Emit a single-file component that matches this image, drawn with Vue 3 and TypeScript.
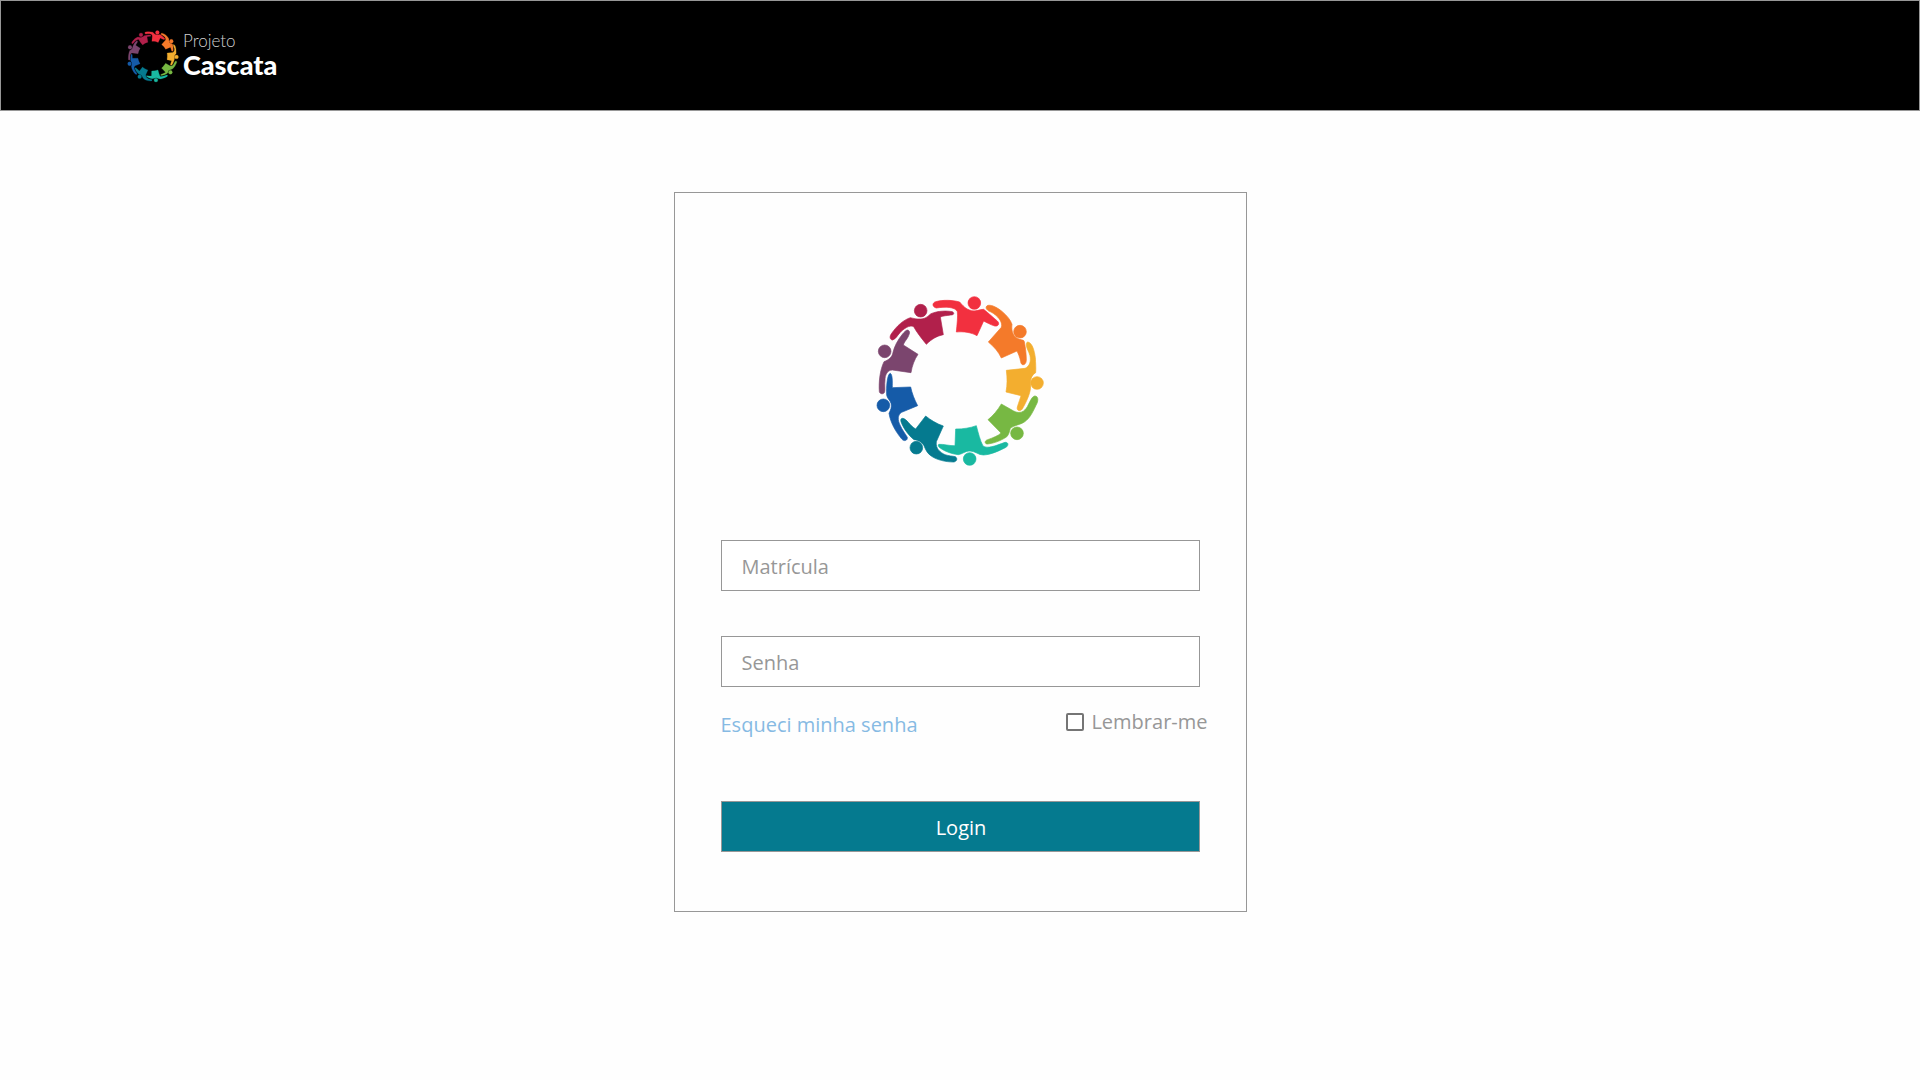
<script setup lang="ts">
import { ref } from 'vue'

interface Figure {
  color: string
  cx: number
  cy: number
  body: string
}

const figures: Figure[] = [
  { color: '#f2303f', cx: 328, cy: 54, body: 'M212,50 C235,44 262,45 284,51 C292,60 302,73 320,77 C335,80 343,73 356,73 C370,84 385,98 397,108 C405,116 400,125 389,123 C376,119 364,112 356,108 L336,152 C318,142 296,139 274,141 C276,118 279,95 277,80 C270,65 240,65 214,69 C202,66 200,54 212,50Z' },
  { color: '#f47a2a', cx: 465, cy: 140, body: 'M370,61 C382,59 400,70 412,80 C427,93 436,104 441,118 C438,140 446,158 464,163 C473,166 476,164 478,170 C482,190 484,210 484,226 C483,243 468,243 467,230 C464,215 460,207 456,198 L409,219 C400,200 388,186 370,171 L409,127 C414,110 398,92 378,81 C360,75 360,63 370,61Z' },
  { color: '#f3ae2f', cx: 516, cy: 294, body: 'M489,171 C503,175 508,198 511,218 C512,235 513,250 512,263 C500,270 494,285 497,302 C497,325 484,350 472,372 C465,381 454,377 457,366 C461,352 466,340 468,332 L423,321 C427,300 427,280 424,256 L480,250 C495,243 498,228 495,212 C492,200 484,190 484,180 C484,173 486,171 489,171Z' },
  { color: '#77b843', cx: 456, cy: 445, body: 'M509,333 C520,333 520,345 516,355 C506,375 496,400 478,411 C465,420 448,420 436,430 C432,445 430,455 418,460 C400,470 385,475 368,477 C358,477 358,467 368,464 C385,458 400,452 408,444 L369,404 C385,392 398,375 409,357 L446,378 C465,388 478,380 487,365 C495,350 500,335 509,333Z' },
  { color: '#19b9a1', cx: 314, cy: 522, body: 'M222,478 C235,477 255,483 270,482 L272,432 C295,432 315,429 334,422 C340,445 345,465 354,483 C368,492 390,483 420,472 C432,471 431,484 421,488 C395,501 375,509 355,510 C340,510 332,499 315,498 C300,498 295,506 280,509 C260,507 235,498 222,486 C218,480 220,479 222,478Z' },
  { color: '#057a8f', cx: 154, cy: 488, body: 'M112,400 C125,400 135,423 152,432 L182,393 C197,405 214,416 235,423 L214,470 C211,490 225,502 240,509 C252,513 262,513 271,515 C279,520 275,530 266,531 C240,531 215,524 200,514 C187,505 183,497 177,482 C170,470 160,465 147,464 C130,450 115,430 108,410 C106,403 109,400 112,400Z' },
  { color: '#155ba8', cx: 55, cy: 361, body: 'M76,265 C83,270 82,290 82,308 L137,306 C141,325 148,343 158,362 L110,382 C97,390 98,405 105,420 C112,436 122,448 127,457 C128,467 118,470 111,463 C92,440 77,415 72,385 C77,375 81,366 78,355 C75,345 66,340 65,330 C64,305 66,280 72,268Z' },
  { color: '#7b456e', cx: 59, cy: 199, body: 'M129,135 C137,140 133,147 129,156 C124,165 117,172 115,180 L159,208 C148,224 141,243 138,263 L82,255 C67,255 60,270 60,285 C58,300 61,312 59,320 C57,329 45,328 43,320 C41,290 45,255 57,230 C70,225 82,217 84,202 C88,185 98,165 112,148 C118,140 125,134 129,135Z' },
  { color: '#b1204b', cx: 167, cy: 77, body: 'M136,98 C145,100 155,103 168,102 C185,100 190,92 198,86 C220,77 245,77 262,80 C269,84 267,90 257,90 C245,92 235,92 226,96 L235,149 C216,153 200,162 184,178 C170,160 155,142 146,125 C135,118 115,132 105,143 C97,152 92,162 83,165 C74,164 73,154 80,145 C95,123 115,105 136,98Z' },
]

const matricula = ref('')
const senha = ref('')
const lembrar = ref(false)
</script>

<template>
  <div class="page">
    <header class="topbar">
      <svg class="mark" viewBox="0 0 570 570" aria-hidden="true">
        <g v-for="f in figures" :key="f.color" :fill="f.color" :stroke="f.color">
          <circle :cx="f.cx" :cy="f.cy" r="19" />
          <path :d="f.body" />
        </g>
      </svg>
      <div class="brand">
        <span class="brand-small">Projeto</span>
        <span class="brand-big">Cascata</span>
      </div>
    </header>

    <main class="content">
      <form class="card" @submit.prevent>
        <svg class="emblem" viewBox="0 0 570 570" role="img" aria-label="Projeto Cascata">
          <g v-for="f in figures" :key="f.color" :fill="f.color" :stroke="f.color">
            <circle :cx="f.cx" :cy="f.cy" r="19" />
            <path :d="f.body" />
          </g>
        </svg>
        <input v-model="matricula" class="field" type="text" placeholder="Matrícula" aria-label="Matrícula" />
        <input v-model="senha" class="field" type="password" placeholder="Senha" aria-label="Senha" />
        <div class="options">
          <a class="forgot" href="#">Esqueci minha senha</a>
          <label class="remember" for="lembrar">
            <input id="lembrar" v-model="lembrar" class="check" type="checkbox" />
            Lembrar-me
          </label>
        </div>
        <button class="submit" type="submit">Login</button>
      </form>
    </main>
  </div>
</template>

<style>
body {
  margin: 0;
  background: #fefefe;
}
</style>

<style scoped>
.page {
  font-family: "Open Sans", "Noto Sans", sans-serif;
  font-size: 20px;
  line-height: 28px;
  color: #979797;
}

.topbar {
  display: flex;
  align-items: center;
  gap: 1px;
  box-sizing: border-box;
  height: 111px;
  padding: 0 123px;
  border: 1px solid #979797;
  background: #000;
}

.mark {
  width: 58px;
  height: 58px;
}

.mark g,
.emblem g {
  stroke-width: 2px;
}

.brand {
  display: flex;
  flex-direction: column;
  padding-bottom: 2px;
  font-family: Lato, sans-serif;
}

.brand-small {
  font-size: 17px;
  line-height: 20px;
  font-weight: 300;
  color: #d0d0d0;
}

.brand-big {
  font-size: 27px;
  line-height: 28px;
  font-weight: 900;
  color: #fff;
}

.content {
  display: flex;
  justify-content: center;
  padding: 81px 16px;
}

.card {
  display: flex;
  flex-direction: column;
  box-sizing: border-box;
  width: 100%;
  max-width: 573px;
  padding: 92px 46px 59px;
  border: 1px solid #979797;
}

.emblem {
  align-self: center;
  width: 190px;
  height: 190px;
  margin-bottom: 65px;
}

.field {
  box-sizing: border-box;
  width: 100%;
  height: 51px;
  margin: 0;
  padding: 2px 20px 0;
  border: 1px solid #979797;
  border-radius: 0;
  background: #fff;
  font: inherit;
  color: #555;
}

.field + .field {
  margin-top: 45px;
}

.field::placeholder {
  color: #979797;
  opacity: 1;
}

.options {
  display: flex;
  justify-content: space-between;
  align-items: flex-start;
  margin: 21px -8px 62px 0;
}

.forgot {
  padding-top: 3px;
  color: #86bae3;
  text-decoration: none;
}

.remember {
  display: flex;
  align-items: center;
  gap: 7px;
}

.check {
  appearance: none;
  box-sizing: border-box;
  width: 18px;
  height: 18px;
  margin: 0;
  border: 2px solid #757575;
  border-radius: 2px;
  background: #fff;
}

.check:checked {
  background: #057a8f;
}

.submit {
  height: 51px;
  padding: 2px 0 0 2px;
  border: 1px solid #979797;
  border-radius: 0;
  background: #057a8f;
  font: inherit;
  font-weight: 500;
  color: #fff;
  cursor: pointer;
}
</style>
